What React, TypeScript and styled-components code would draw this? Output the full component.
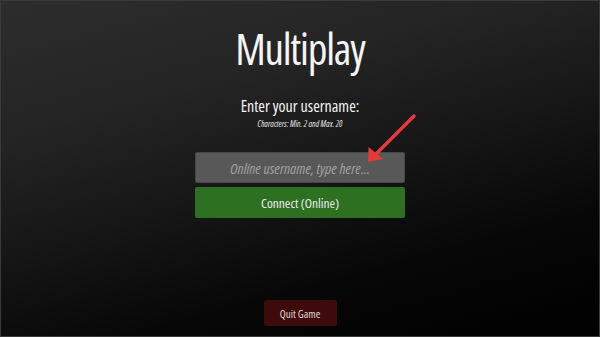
import React from "react";
import styled, { createGlobalStyle } from "styled-components";

const Global = createGlobalStyle`
  html, body { margin: 0; padding: 0; background: #000; }
  * { box-sizing: border-box; }
`;

const Screen = styled.div`
  position: relative;
  width: 600px;
  height: 337px;
  border: 1px solid #3a3a3a;
  background: linear-gradient(165deg, #2d2d2d 0%, #242424 28%, #161616 52%, #070707 75%, #000 100%);
  display: flex;
  flex-direction: column;
  align-items: center;
  font-family: "Open Sans", "DejaVu Sans", sans-serif;
  font-stretch: 75%;
  color: #f4f4f4;
  overflow: hidden;
`;

const Title = styled.h1`
  margin: 26px 0 0;
  font-size: 43px;
  line-height: 43px;
  font-weight: 400;
  letter-spacing: -1.2px;
`;

const Prompt = styled.div`
  margin-top: 26px;
  font-size: 16px;
  line-height: 20px;
  font-weight: 500;
`;

const Hint = styled.div`
  margin-top: 3px;
  font-size: 8.6px;
  line-height: 11px;
  font-style: italic;
  color: #e6e6e6;
`;

const Form = styled.div`
  margin-top: 22px;
  width: 210px;
  display: flex;
  flex-direction: column;
  gap: 4px;
`;

const Input = styled.input`
  height: 31px;
  width: 100%;
  border: 1px solid #474747;
  border-radius: 2px;
  background: #585858;
  text-align: center;
  font-family: inherit;
  font-stretch: 75%;
  font-size: 15px;
  color: #eee;
  outline: none;
  &::placeholder {
    color: #a0a0a0;
    font-style: italic;
  }
`;

const Button = styled.button<{ $tone: "green" | "red" }>`
  border: none;
  border-radius: 2px;
  font-family: inherit;
  font-stretch: 75%;
  font-weight: 500;
  color: #ececec;
  cursor: pointer;
  padding: 0;
  background: ${(p) => (p.$tone === "green" ? "#2e7021" : "#3d0b0c")};
`;

const ConnectButton = styled(Button)`
  height: 31px;
  width: 100%;
  font-size: 13.4px;
`;

const QuitButton = styled(Button)`
  margin-top: auto;
  margin-bottom: 10px;
  width: 73px;
  height: 26px;
  font-size: 11px;
  color: #e2dada;
`;

const Arrow = styled.svg`
  position: absolute;
  left: 359px;
  top: 109px;
  width: 60px;
  height: 60px;
`;

export default function App() {
  return (
    <>
      <Global />
      <Screen>
        <Title>Multiplay</Title>
        <Prompt>Enter your username:</Prompt>
        <Hint>Characters: Min. 2 and Max. 20</Hint>
        <Form>
          <Input placeholder="Online username, type here..." />
          <ConnectButton $tone="green">Connect (Online)</ConnectButton>
        </Form>
        <QuitButton $tone="red">Quit Game</QuitButton>
        <Arrow viewBox="0 0 60 60">
          <line x1="54" y1="6" x2="15" y2="45" stroke="#e33b3b" strokeWidth="3.5" strokeLinecap="round" />
          <polygon points="8,52 8.5,37 23,49" fill="#e33b3b" />
        </Arrow>
      </Screen>
    </>
  );
}
